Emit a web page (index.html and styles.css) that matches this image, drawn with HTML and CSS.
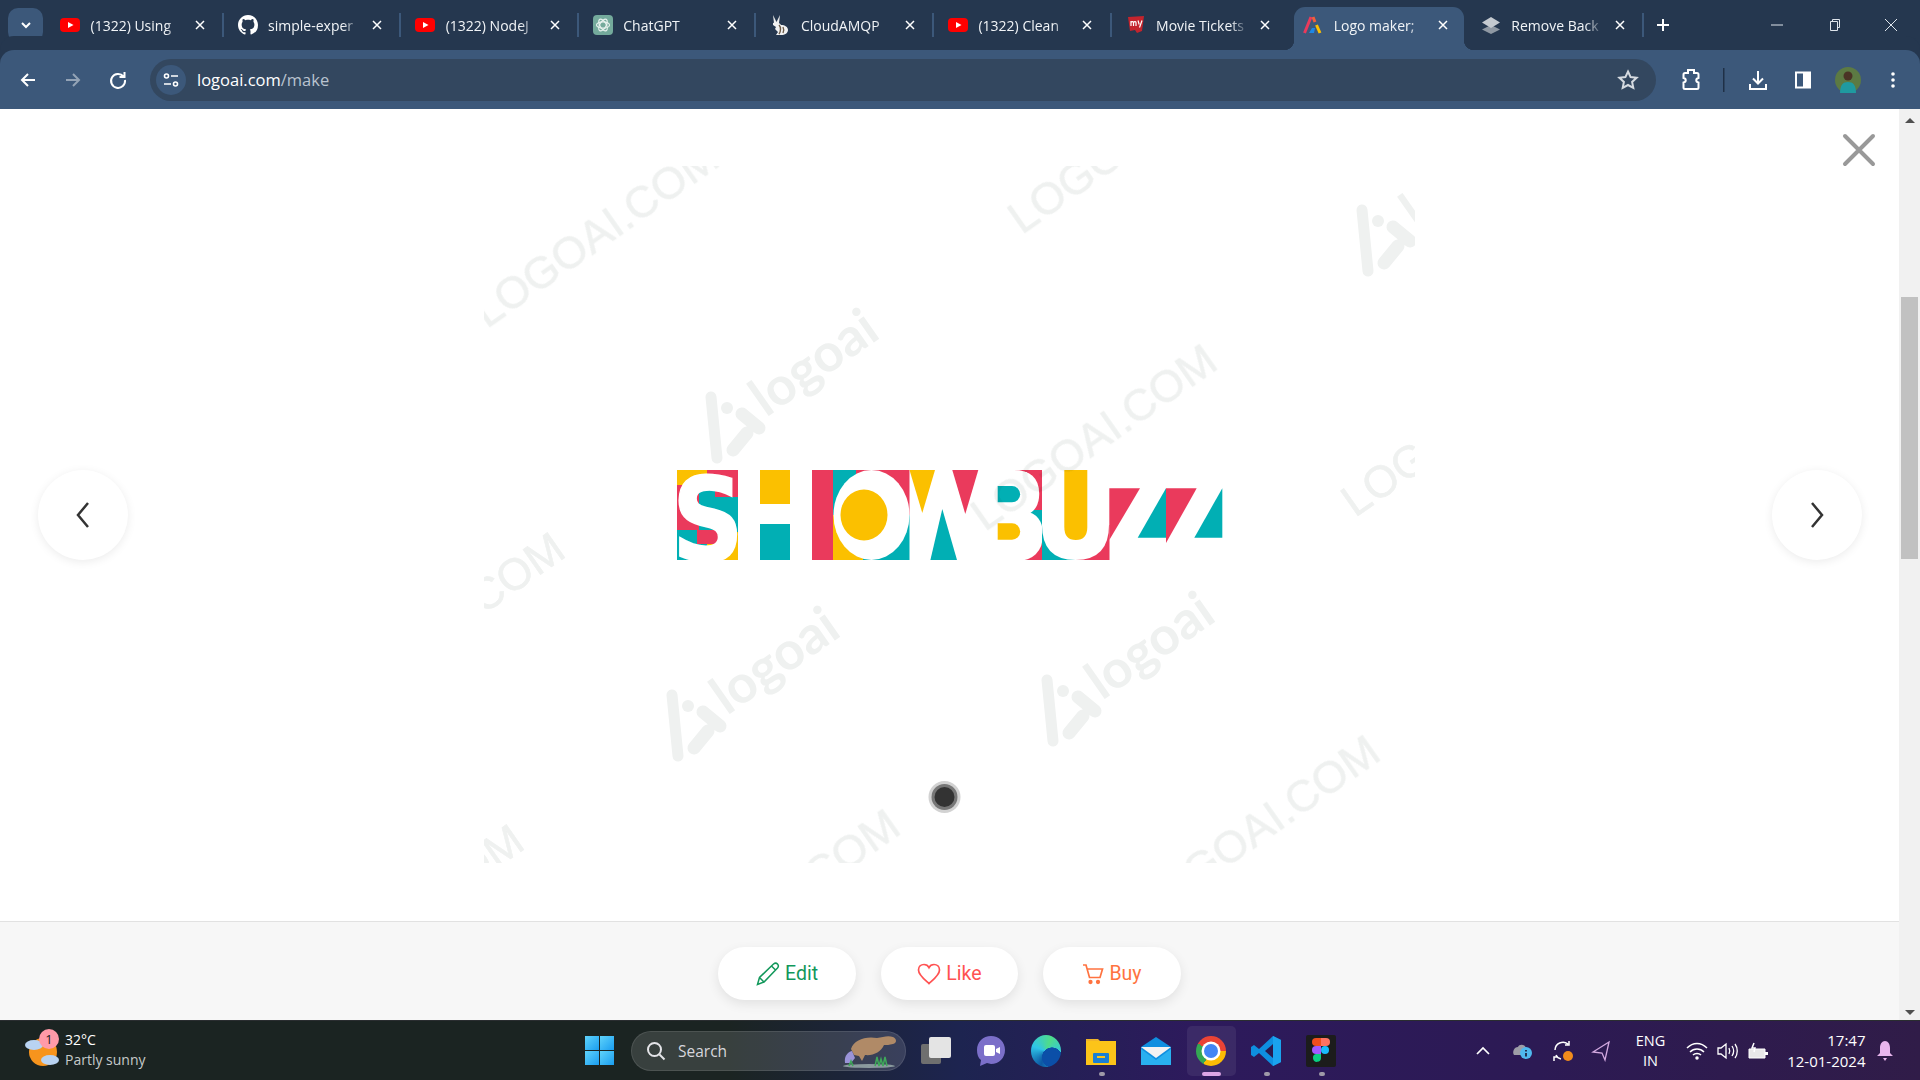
FILE: index.html
```html
<!DOCTYPE html>
<html lang="en">
<head>
    <meta charset="UTF-8">
    <title>Logo maker</title>
    <link rel="stylesheet" href="styles.css">
</head>
<body>
    <svg class="defs" width="0" height="0">
        <symbol id="yt" viewBox="0 0 20 20">
            <rect y="3" width="20" height="14" rx="4" fill="#f00"/>
            <path d="M8 7l5.5 3L8 13z" fill="#fff"/>
        </symbol>
        <symbol id="tabclose" viewBox="0 0 12 12">
            <path d="M2 2l8 8M10 2l-8 8" stroke="#fff" stroke-width="1.5" fill="none"/>
        </symbol>
    </svg>

    <header class="tabstrip">
        <button class="tab-search">
            <svg width="12" height="12" viewBox="0 0 12 12"><path d="M2 4l4 4 4-4" stroke="#fff" stroke-width="2" fill="none"/></svg>
        </button>
        <div class="tabs">
            <div class="tab">
                <svg class="favicon"><use href="#yt"/></svg>
                <span class="tab-title">(1322) Using</span>
                <svg class="tab-x"><use href="#tabclose"/></svg>
            </div>
            <div class="tab">
                <svg class="favicon" viewBox="0 0 16 16"><path fill="#fff" d="M8 0C3.58 0 0 3.58 0 8c0 3.54 2.29 6.53 5.47 7.59.4.07.55-.17.55-.38 0-.19-.01-.82-.01-1.49-2.01.37-2.53-.49-2.69-.94-.09-.23-.48-.94-.82-1.13-.28-.15-.68-.52-.01-.53.63-.01 1.08.58 1.23.82.72 1.21 1.87.87 2.33.66.07-.52.28-.87.51-1.07-1.78-.2-3.64-.89-3.64-3.95 0-.87.31-1.59.82-2.15-.08-.2-.36-1.02.08-2.12 0 0 .67-.21 2.2.82.64-.18 1.32-.27 2-.27.68 0 1.36.09 2 .27 1.53-1.04 2.2-.82 2.2-.82.44 1.1.16 1.92.08 2.12.51.56.82 1.27.82 2.15 0 3.07-1.87 3.75-3.65 3.95.29.25.54.73.54 1.48 0 1.07-.01 1.93-.01 2.2 0 .21.15.46.55.38A8.013 8.013 0 0016 8c0-4.42-3.58-8-8-8z"/></svg>
                <span class="tab-title">simple-exper</span>
                <svg class="tab-x"><use href="#tabclose"/></svg>
            </div>
            <div class="tab">
                <svg class="favicon"><use href="#yt"/></svg>
                <span class="tab-title">(1322) NodeJ</span>
                <svg class="tab-x"><use href="#tabclose"/></svg>
            </div>
            <div class="tab">
                <svg class="favicon" viewBox="0 0 20 20">
                    <rect width="20" height="20" rx="4" fill="#74aa9c"/>
                    <g fill="none" stroke="#e8f2ef" stroke-width="1.2">
                        <ellipse cx="10" cy="10" rx="6.5" ry="3.2"/>
                        <ellipse cx="10" cy="10" rx="6.5" ry="3.2" transform="rotate(60 10 10)"/>
                        <ellipse cx="10" cy="10" rx="6.5" ry="3.2" transform="rotate(120 10 10)"/>
                    </g>
                </svg>
                <span class="tab-title">ChatGPT</span>
                <svg class="tab-x"><use href="#tabclose"/></svg>
            </div>
            <div class="tab">
                <svg class="favicon" viewBox="0 0 20 20">
                    <path d="M3 0l4 8-3 0zM10 0l-1 8-3 0z" fill="#eee"/>
                    <path d="M3 8c4-2 7 0 8 2 4 0 7 2 7 5 0 3-3 5-7 5H6l2-3-3-3 1-2-3-2z" fill="#f2f2f2"/>
                    <path d="M9 10c2 2 2 6 0 9M13 12c1 2 1 4 0 6" stroke="#6b5a48" stroke-width="1.4" fill="none"/>
                </svg>
                <span class="tab-title">CloudAMQP</span>
                <svg class="tab-x"><use href="#tabclose"/></svg>
            </div>
            <div class="tab">
                <svg class="favicon"><use href="#yt"/></svg>
                <span class="tab-title">(1322) Clean</span>
                <svg class="tab-x"><use href="#tabclose"/></svg>
            </div>
            <div class="tab">
                <svg class="favicon" viewBox="0 0 20 20">
                    <path d="M2 2l16-1-2 15-5 2-2-3-5 1z" fill="#c4242d"/>
                    <path d="M5 11V6M5 7.5c1-1.500 2.500-1 2.500 0V11M7.500 7.500c1-1.500 2.500-1 2.500 0V11M12 5.500l1.200 4M16 5.500l-2.500 7" stroke="#fff" stroke-width="1.2" fill="none"/>
                </svg>
                <span class="tab-title">Movie Tickets</span>
                <svg class="tab-x"><use href="#tabclose"/></svg>
            </div>
            <div class="tab active">
                <svg class="favicon" viewBox="0 0 20 20">
                    <path d="M1.500 18L8 2" stroke="#ea3a5c" stroke-width="3" fill="none"/>
                    <path d="M10 2l2 5" stroke="#f25f3a" stroke-width="3" fill="none"/>
                    <path d="M13.500 10l3.500 8" stroke="#fbc000" stroke-width="3" fill="none"/>
                    <path d="M6 18l3-5h3l-1 5z" fill="#1e88e5"/>
                </svg>
                <span class="tab-title">Logo maker;</span>
                <svg class="tab-x"><use href="#tabclose"/></svg>
            </div>
            <div class="tab last">
                <svg class="favicon" viewBox="0 0 20 20">
                    <path d="M10 10L1 14.500l9 4.500 9-4.500z" fill="#8f98a3"/>
                    <path d="M10 2L1 7.500 10 13l9-5.500z" fill="#c5cad0"/>
                </svg>
                <span class="tab-title">Remove Back</span>
                <svg class="tab-x"><use href="#tabclose"/></svg>
            </div>
        </div>
        <svg class="new-tab" width="14" height="14" viewBox="0 0 14 14"><path d="M7 1v12M1 7h12" stroke="#fff" stroke-width="2"/></svg>
        <div class="window-controls">
            <svg width="14" height="14" viewBox="0 0 14 14"><path d="M1 7h12" stroke="#dfe5ec" stroke-width="1"/></svg>
            <svg width="14" height="14" viewBox="0 0 14 14"><path d="M3.500 3.500h7v9h-7zM5.500 3.500V1.500h7v8h-2" stroke="#dfe5ec" stroke-width="1" fill="none"/></svg>
            <svg width="14" height="14" viewBox="0 0 14 14"><path d="M1 1l12 12M13 1L1 13" stroke="#dfe5ec" stroke-width="1"/></svg>
        </div>
    </header>

    <nav class="toolbar">
        <button class="tool">
            <svg width="20" height="20" viewBox="0 0 20 20"><path d="M17 10H4M10 4l-6 6 6 6" stroke="#fff" stroke-width="2" fill="none"/></svg>
        </button>
        <button class="tool">
            <svg width="20" height="20" viewBox="0 0 20 20"><path d="M3 10h13M10 4l6 6-6 6" stroke="#93a3b6" stroke-width="2" fill="none"/></svg>
        </button>
        <button class="tool">
            <svg width="20" height="20" viewBox="0 0 20 20"><path d="M15.500 6.500A7 7 0 1 0 17 10M16.500 2v5h-5" stroke="#fff" stroke-width="2" fill="none"/></svg>
        </button>
        <div class="omnibox">
            <span class="site-info">
                <svg width="18" height="18" viewBox="0 0 18 18" fill="none" stroke="#fff" stroke-width="1.6"><circle cx="4.500" cy="5" r="2"/><path d="M9 5h7M2 13h7"/><circle cx="13.500" cy="13" r="2"/></svg>
            </span>
            <span class="url">logoai.com<span class="url-path">/make</span></span>
            <svg class="star" width="22" height="22" viewBox="0 0 22 22"><path d="M11 2.500l2.600 5.600 6 .7-4.500 4.100 1.200 6L11 16l-5.300 2.900 1.200-6L2.400 8.800l6-.7z" fill="none" stroke="#d5dae0" stroke-width="2"/></svg>
        </div>
        <button class="tool ext">
            <svg width="22" height="24" viewBox="0 0 22 24"><path d="M5 5h3V2h6v3h3a1.500 1.500 0 0 1 1.500 1.500V10c-3 .5-3 4 0 4.500v5a1.500 1.500 0 0 1-1.500 1.500H5a1.500 1.500 0 0 1-1.500-1.500v-5c3-.5 3-4 0-4.500V6.500A1.500 1.500 0 0 1 5 5z" fill="none" stroke="#fff" stroke-width="2"/></svg>
        </button>
        <span class="tool-sep"></span>
        <button class="tool">
            <svg width="22" height="22" viewBox="0 0 22 22"><path d="M11 2v12M6 9.500l5 5 5-5M3 15v5h16v-5" stroke="#fff" stroke-width="2" fill="none"/></svg>
        </button>
        <button class="tool">
            <svg width="20" height="20" viewBox="0 0 20 20"><rect x="3" y="2.500" width="14" height="15" fill="none" stroke="#fff" stroke-width="2"/><rect x="10" y="2.500" width="7" height="15" fill="#fff"/></svg>
        </button>
        <button class="tool">
            <svg width="26" height="26" viewBox="0 0 26 26">
                <circle cx="13" cy="13" r="13" fill="#5c7a43"/>
                <circle cx="13" cy="9" r="4.500" fill="#4a3325"/>
                <path d="M5 26c0-8 3-11 8-11s8 3 8 11z" fill="#1f9aa0"/>
            </svg>
        </button>
        <button class="tool">
            <svg width="20" height="20" viewBox="0 0 20 20" fill="#fff"><circle cx="10" cy="4" r="1.800"/><circle cx="10" cy="10" r="1.800"/><circle cx="10" cy="16" r="1.800"/></svg>
        </button>
    </nav>

    <div class="page">
        <main class="content">
            <section class="viewer">
                <svg class="canvas" width="1899" height="812" viewBox="0 109 1899 812">
                    <defs>
                        <clipPath id="wm-clip"><rect x="484" y="166" width="931" height="697"/></clipPath>
                        <g id="wm-domain">
                            <text class="wm-domain" transform="rotate(-35)">LOGOAI.COM</text>
                        </g>
                        <g id="wm-brand">
                            <path d="M-3-30L3 31" stroke="#eff1f0" stroke-width="11" stroke-linecap="round"/>
                            <circle cx="13" cy="-19" r="6" fill="#eff1f0"/>
                            <path d="M28-13L45 1M33 6L19 23" stroke="#eff1f0" stroke-width="13" stroke-linecap="round"/>
                            <text class="wm-brand" transform="translate(52 -9) rotate(-35)">logoai</text>
                        </g>
                    </defs>

                    <!-- SHOWBUZZ, coloured blocks with white letters on top -->
                    <g class="logo">
                        <rect x="677" y="470" width="30" height="15" fill="#fbc000"/>
                        <rect x="707" y="470" width="31" height="27" fill="#ea3a5c"/>
                        <rect x="677" y="485" width="22" height="45" fill="#ea3a5c"/>
                        <rect x="699" y="485" width="8" height="12" fill="#ea3a5c"/>
                        <rect x="699" y="497" width="39" height="35" fill="#01afb4"/>
                        <rect x="699" y="485" width="16" height="14" fill="#01afb4"/>
                        <rect x="677" y="530" width="30" height="30" fill="#01afb4"/>
                        <rect x="697" y="530" width="21" height="14" fill="#ea3a5c"/>
                        <rect x="718" y="532" width="20" height="28" fill="#fbc000"/>
                        <rect x="707" y="544" width="11" height="16" fill="#fbc000"/>
                        <text class="logo-letter s" transform="translate(672 559.500) scale(.86 1)">S</text>

                        <rect x="760" y="470" width="30" height="34" fill="#fbc000"/>
                        <rect x="760" y="524" width="30" height="36" fill="#01afb4"/>

                        <rect x="812" y="470" width="21.500" height="90" fill="#ea3a5c"/>
                        <rect x="833" y="470" width="38" height="45" fill="#01afb4"/>
                        <rect x="856" y="470" width="53.500" height="45" fill="#ea3a5c"/>
                        <rect x="833" y="515" width="30" height="45" fill="#fbc000"/>
                        <rect x="863" y="515" width="46.500" height="45" fill="#01afb4"/>
                        <ellipse cx="871.500" cy="515" rx="38" ry="45" fill="#fff"/>
                        <ellipse cx="864" cy="515" rx="23.500" ry="25.500" fill="#fbc000"/>

                        <path d="M909.500 470H935L922.300 513z" fill="#fbc000"/>
                        <path d="M952.300 470h26L965.300 514z" fill="#ea3a5c"/>
                        <path d="M942.300 509L957 560h-26.600z" fill="#01afb4"/>

                        <rect x="1015" y="470" width="27" height="40" fill="#ea3a5c"/>
                        <rect x="1015" y="510" width="27" height="28" fill="#01afb4"/>
                        <rect x="1005" y="538" width="37" height="22" fill="#ea3a5c"/>
                        <text class="logo-letter b" transform="translate(977 558.500) scale(.75 1)">B</text>
                        <rect x="985" y="472" width="42" height="86" fill="#fff"/>
                        <path d="M997.700 486H1012a8 8 0 0 1 0 16.300H997.700z" fill="#01afb4"/>
                        <path d="M997.700 523.300H1012a8 8 0 0 1 0 16.400H997.700z" fill="#fbc000"/>

                        <rect x="1042" y="525" width="34" height="35" fill="#01afb4"/>
                        <rect x="1076" y="525" width="33.500" height="35" fill="#ea3a5c"/>
                        <path d="M1042 470V525Q1042 560 1075.500 560Q1109 560 1109 525V470z" fill="#fff"/>
                        <path d="M1064.300 470h23v57q0 13-11.500 13t-11.500-13z" fill="#fbc000"/>

                        <path d="M1109.300 488.300H1140L1109.300 540z" fill="#ea3a5c"/>
                        <path d="M1166 488.300V537.700H1137.700z" fill="#01afb4"/>
                        <path d="M1166 488.300h30.700L1166 543z" fill="#ea3a5c"/>
                        <path d="M1222.300 488.300V537.700H1194.300z" fill="#01afb4"/>
                    </g>

                    <g class="watermarks" clip-path="url(#wm-clip)">
                        <use href="#wm-domain" x="487" y="329"/>
                        <use href="#wm-domain" x="985" y="532"/>
                        <use href="#wm-domain" x="1022" y="235"/>
                        <use href="#wm-domain" x="1355" y="518"/>
                        <use href="#wm-domain" x="333" y="720"/>
                        <use href="#wm-domain" x="292" y="1012"/>
                        <use href="#wm-domain" x="668" y="997"/>
                        <use href="#wm-domain" x="1148" y="923"/>
                        <use href="#wm-brand" x="714" y="427"/>
                        <use href="#wm-brand" x="1365" y="240"/>
                        <use href="#wm-brand" x="675" y="725"/>
                        <use href="#wm-brand" x="1050" y="710"/>
                    </g>

                    <circle cx="944.500" cy="797" r="16" fill="#d2d2d2"/>
                    <circle cx="944.500" cy="797" r="13" fill="#777"/>
                    <circle cx="944.500" cy="797" r="10" fill="#333"/>
                </svg>

                <button class="close-view">
                    <svg width="34" height="34" viewBox="0 0 34 34"><path d="M3 3l28 28M31 3L3 31" stroke="#999" stroke-width="4" stroke-linecap="round"/></svg>
                </button>
                <button class="nav-arrow prev">
                    <svg width="16" height="28" viewBox="0 0 16 28"><path d="M13 2L3 14l10 12" stroke="#333" stroke-width="2.500" fill="none"/></svg>
                </button>
                <button class="nav-arrow next">
                    <svg width="16" height="28" viewBox="0 0 16 28"><path d="M3 2l10 12L3 26" stroke="#333" stroke-width="2.500" fill="none"/></svg>
                </button>
            </section>

            <footer class="actions">
                <button class="action edit">
                    <svg width="24" height="24" viewBox="0 0 24 24" fill="none" stroke="currentColor" stroke-width="1.500"><path d="M1.500 22.500l2-7L17.500 2c1.500-1.200 3-1 4 0s1.200 2.500 0 4L8 20zM3.500 15.500L8 20M15.500 4l4.500 4.500"/></svg>
                    Edit
                </button>
                <button class="action like">
                    <svg width="24" height="22" viewBox="0 0 24 22" fill="none" stroke="currentColor" stroke-width="1.700"><path d="M12 20.500C7 16 1.500 12 1.500 7 1.500 3.500 4 1.500 7 1.500c2 0 4 1 5 3 1-2 3-3 5-3 3 0 5.500 2 5.500 5.500 0 5-5.500 9-10.500 13.500z"/></svg>
                    Like
                </button>
                <button class="action buy">
                    <svg width="22" height="22" viewBox="0 0 22 22" fill="none" stroke="currentColor" stroke-width="1.700"><path d="M1 2h3l3.500 12.500H18L20.500 6H5"/><circle cx="8.500" cy="19" r="1.300" fill="currentColor"/><circle cx="16" cy="19" r="1.300" fill="currentColor"/></svg>
                    Buy
                </button>
            </footer>
        </main>

        <aside class="scrollbar">
            <span class="scroll-up"></span>
            <span class="scroll-thumb"></span>
            <span class="scroll-down"></span>
        </aside>
    </div>

    <footer class="taskbar">
        <div class="weather">
            <span class="weather-icon">
                <svg width="36" height="38" viewBox="0 0 36 38">
                    <circle cx="19" cy="20" r="14" fill="#f7941d"/>
                    <ellipse cx="10" cy="13" rx="9" ry="5" fill="#b9d3f2"/>
                    <ellipse cx="26" cy="28" rx="9" ry="5" fill="#b9d3f2"/>
                </svg>
                <span class="weather-badge">1</span>
            </span>
            <div class="weather-text">
                <span class="temp">32°C</span>
                <span class="sky">Partly sunny</span>
            </div>
        </div>

        <div class="apps">
            <span class="start">
                <span></span><span></span><span></span><span></span>
            </span>
            <div class="search">
                <svg width="20" height="20" viewBox="0 0 20 20" fill="none" stroke="#e4e4e8" stroke-width="2"><circle cx="8.500" cy="8.500" r="6.500"/><path d="M13.500 13.500l5 5"/></svg>
                <span class="search-label">Search</span>
                <svg class="platypus" width="54" height="36" viewBox="0 0 54 36">
                    <path d="M8 16c3-9 14-13 26-11 6-1 11-3 16-1 4 2 4 6 0 7-4 1-6 1-9 1-3 7-11 11-19 10l-3 6-3-5-5-1z" fill="#b08a67"/>
                    <path d="M2 30c-1-6 2-11 7-12l3 7-4 5z" fill="#9a93d8"/>
                    <ellipse cx="26" cy="33" rx="26" ry="2" fill="#8a9a9e"/>
                    <path d="M32 33l2-9 2 9 2-7 2 7 2-9 2 9" stroke="#3fa85a" stroke-width="1.500" fill="none"/>
                    <path d="M6 33l2-5 2 5" stroke="#3fa85a" stroke-width="1.500" fill="none"/>
                </svg>
            </div>
            <span class="app">
                <svg width="30" height="28" viewBox="0 0 30 28"><rect x="0" y="7" width="20" height="20" rx="2" fill="#6f6f6f"/><rect x="8" y="0" width="22" height="21" rx="2" fill="#e4e4e4"/></svg>
            </span>
            <span class="app">
                <svg width="30" height="32" viewBox="0 0 30 32">
                    <path d="M15 1C7 1 1 7 1 15c0 4 1 8 4 10l-1 6 7-3c1 0 3 1 4 1 8 0 14-6 14-14S23 1 15 1z" fill="#7b6fc9"/>
                    <rect x="8" y="10" width="11" height="11" rx="2" fill="#fff"/>
                    <path d="M20 14l4-2v7l-4-2z" fill="#fff"/>
                </svg>
            </span>
            <span class="app">
                <span class="edge"></span>
            </span>
            <span class="app dotted">
                <svg width="30" height="30" viewBox="0 0 30 30">
                    <path d="M0 3h12l3 3H0z" fill="#f0b429"/>
                    <rect y="5" width="30" height="24" fill="#fcc419"/>
                    <rect x="7" y="17" width="16" height="10" rx="1" fill="#1a7fd4"/>
                    <rect x="11" y="20" width="8" height="2" fill="#fcc419"/>
                </svg>
            </span>
            <span class="app">
                <svg width="30" height="28" viewBox="0 0 30 28">
                    <path d="M0 10L15 0l15 10v18H0z" fill="#0f8fe0"/>
                    <path d="M0 10h30L15 21z" fill="#f2f2f2"/>
                    <path d="M0 28V12l15 11 15-11v16z" fill="#29b0f0"/>
                </svg>
            </span>
            <span class="app current">
                <span class="chrome"></span>
            </span>
            <span class="app dotted">
                <svg width="32" height="32" viewBox="0 0 32 32">
                    <path d="M23 1l8 4v22l-8 4-14-13-5 4-3-2V12l3-2 5 4z" fill="#0e8fe0"/>
                    <path d="M23 9l-8 7 8 7z" fill="#2b1a4e"/>
                    <path d="M23 1l8 4v22l-8 4z" fill="#1aa3ee"/>
                </svg>
            </span>
            <span class="app dotted">
                <svg width="30" height="32" viewBox="0 0 30 32">
                    <rect width="30" height="32" rx="2" fill="#1c1c1c"/>
                    <path d="M10 3h5v8h-5a4 4 0 0 1 0-8z" fill="#f24e1e"/>
                    <path d="M15 3h5a4 4 0 0 1 0 8h-5z" fill="#ff7262"/>
                    <path d="M10 11h5v8h-5a4 4 0 0 1 0-8z" fill="#a259ff"/>
                    <circle cx="19" cy="15" r="4" fill="#1abcfe"/>
                    <path d="M10 19h5v4a4 4 0 1 1-5-4z" fill="#0acf83"/>
                </svg>
            </span>
        </div>

        <div class="tray">
            <svg class="tray-chevron" width="14" height="14" viewBox="0 0 14 14"><path d="M1 10l6-6 6 6" stroke="#fff" stroke-width="1.700" fill="none"/></svg>
            <svg class="tray-cloud" width="22" height="20" viewBox="0 0 22 20">
                <path d="M2 14c-2-3 0-8 4-8 1-3 7-3 8 1v7z" fill="#9d9da6"/>
                <circle cx="14" cy="12" r="6" fill="#4fb8ee"/>
                <path d="M14 9v1.500M14 12v3.500" stroke="#1c1c3a" stroke-width="1.700"/>
            </svg>
            <svg class="tray-sync" width="22" height="24" viewBox="0 0 22 24">
                <path d="M3 11a8 8 0 0 1 13-6M17 2v4h-4M4 16a7 7 0 0 0 5 4M2 22v-4h4" stroke="#fff" stroke-width="1.500" fill="none"/>
                <circle cx="16" cy="17" r="5" fill="#f28c1c"/>
            </svg>
            <svg class="tray-nav" width="20" height="22" viewBox="0 0 20 22"><path d="M18 2L2 12l9 1 3 7z" stroke="#d3a9e0" stroke-width="1.300" fill="none"/></svg>
            <div class="lang"><span>ENG</span><span>IN</span></div>
            <svg class="tray-wifi" width="22" height="20" viewBox="0 0 22 20" fill="none" stroke="#fff" stroke-width="1.500"><path d="M1 7c6-6 14-6 20 0M4 11c4-4 10-4 14 0M7 14c2-2 6-2 8 0"/><circle cx="11" cy="17" r="1" fill="#fff"/></svg>
            <svg class="tray-vol" width="22" height="20" viewBox="0 0 22 20" fill="none" stroke="#fff" stroke-width="1.300"><path d="M2 7h3l5-4v14l-5-4H2zM13 7c1 2 1 4 0 6M16 5c2 3 2 7 0 10M19 3c3 4 3 10 0 14"/></svg>
            <svg class="tray-batt" width="24" height="20" viewBox="0 0 24 20"><path d="M3 8h16v9H3z" fill="#e8e8e8" stroke="#fff"/><path d="M19 11h3v3h-3z" fill="#fff"/><path d="M8 2l-2 5h3l-1 4" stroke="#fff" fill="none" stroke-width="1.500"/></svg>
            <div class="clock"><span>17:47</span><span>12-01-2024</span></div>
            <svg class="tray-bell" width="18" height="22" viewBox="0 0 18 22"><path d="M9 1c3 0 5 3 5 7v5l3 3H1l3-3V8c0-4 2-7 5-7zM7 18h4l-2 3z" fill="#e9b6ee"/></svg>
        </div>
    </footer>
</body>
</html>
```

FILE: styles.css
```css
* {
    box-sizing: border-box;
}
html, body {
    margin: 0;
    height: 100%;
    overflow: hidden;
}
body {
    display: flex;
    flex-direction: column;
    width: 1920px;
    height: 1080px;
    font-family: "Open Sans", "Noto Sans", sans-serif;
    color: #fff;
    background: #fff;
}
button {
    border: none;
    padding: 0;
    background: none;
    font: inherit;
}
.defs {
    position: absolute;
}

/* tab strip */
.tabstrip {
    display: flex;
    align-items: center;
    height: 50px;
    flex: none;
    background-color: #25374f;
    padding-left: 8px;
}
.tab-search {
    display: flex;
    align-items: center;
    justify-content: center;
    width: 35px;
    height: 34px;
    border-radius: 10px;
    background-color: #3c587a;
}
.tabs {
    display: flex;
    align-self: flex-end;
    margin-left: 3px;
    height: 43px;
}
.tab {
    position: relative;
    display: flex;
    align-items: center;
    width: 177.6px;
    height: 43px;
    padding-left: 14px;
    padding-bottom: 7px;
}
.tab::after {
    content: "";
    position: absolute;
    right: 0;
    top: 6px;
    width: 2px;
    height: 24px;
    background-color: #3c587a;
}
.tab.active {
    background-color: #3c587a;
    border-radius: 11px 11px 0 0;
    margin: 0 3px 0 5px;
    width: 169.6px;
    padding-left: 9px;
}
.tab.active::before {
    content: "";
    position: absolute;
    left: -10px;
    bottom: 0;
    width: 10px;
    height: 10px;
    background: radial-gradient(circle at 0 0, transparent 10px, #3c587a 10.5px);
}
.tab.active::after {
    left: auto;
    right: -10px;
    top: auto;
    bottom: 0;
    width: 10px;
    height: 10px;
    background: radial-gradient(circle at 100% 0, transparent 10px, #3c587a 10.5px);
}
.tab:has(+ .active)::after {
    display: none;
}
.favicon {
    width: 20px;
    height: 20px;
    flex: none;
}
.tab-title {
    width: 88px;
    margin-left: 10.5px;
    overflow: hidden;
    white-space: nowrap;
    font-size: 14px;
    color: #f1f4f7;
    -webkit-mask-image: linear-gradient(90deg, #000 85%, rgba(0, 0, 0, 0.25) 100%);
    mask-image: linear-gradient(90deg, #000 85%, rgba(0, 0, 0, 0.25) 100%);
}
.tab-x {
    width: 12px;
    height: 12px;
    margin-left: 15px;
    flex: none;
}
.new-tab {
    margin-left: 12px;
}
.window-controls {
    display: flex;
    gap: 43px;
    margin-left: auto;
    margin-right: 22px;
}

/* toolbar */
.toolbar {
    display: flex;
    align-items: center;
    flex: none;
    height: 59px;
    padding-left: 5px;
    background-color: #3c587a;
    border-radius: 14px 14px 0 0;
    box-shadow: 0 -14px 0 #25374f;
}
.tool {
    display: flex;
    align-items: center;
    justify-content: center;
    width: 45px;
    height: 36px;
    flex: none;
}
.omnibox {
    display: flex;
    align-items: center;
    width: 1506px;
    height: 42px;
    margin-left: 10px;
    padding: 0 17px 0 6px;
    border-radius: 21px;
    background-color: #33475f;
}
.site-info {
    display: flex;
    align-items: center;
    justify-content: center;
    width: 30px;
    height: 30px;
    border-radius: 50%;
    background-color: #3c587a;
}
.url {
    margin-left: 11px;
    font-size: 16.5px;
    color: #fff;
}
.url-path {
    color: #b9c3cf;
}
.star {
    margin-left: auto;
}
.ext {
    margin-left: 12px;
}
.tool-sep {
    width: 22px;
    height: 24px;
    flex: none;
    background: linear-gradient(#1f3047, #1f3047) center / 1.5px 100% no-repeat;
}

/* page */
.page {
    display: flex;
    flex: none;
    height: 911px;
}
.content {
    display: flex;
    flex-direction: column;
    width: 1899px;
}
.viewer {
    position: relative;
    height: 812px;
    background-color: #fff;
}
.canvas {
    display: block;
}
.logo-letter {
    font-weight: 700;
    fill: #fff;
}
.logo-letter.s {
    font-family: "DejaVu Sans", sans-serif;
    font-size: 116px;
    stroke: #fff;
    stroke-width: 1.5px;
}
.logo-letter.b {
    font-family: "Liberation Sans", sans-serif;
    font-size: 127px;
    stroke: #fff;
    stroke-width: 4px;
}
.watermarks {
    mix-blend-mode: multiply;
}
.wm-domain {
    font-family: "Liberation Sans", sans-serif;
    font-size: 44.5px;
    fill: #eff1f0;
    stroke: #eff1f0;
    stroke-width: 0.6px;
}
.wm-brand {
    font-family: "Lato", sans-serif;
    font-weight: 700;
    font-size: 53px;
    fill: #eff1f0;
}
.close-view {
    position: absolute;
    top: 24px;
    left: 1842px;
    line-height: 0;
}
.nav-arrow {
    position: absolute;
    top: 361px;
    display: flex;
    align-items: center;
    justify-content: center;
    width: 90px;
    height: 90px;
    border-radius: 50%;
    background-color: #fff;
    box-shadow: 0 2px 10px rgba(0, 0, 0, 0.08);
}
.prev {
    left: 38px;
}
.next {
    left: 1772px;
}
.actions {
    display: flex;
    justify-content: center;
    gap: 25px;
    flex: 1;
    padding-top: 25px;
    background-color: #f7f7f7;
    border-top: 1px solid #e2e2e2;
}
.action {
    display: flex;
    align-items: center;
    justify-content: center;
    gap: 5px;
    width: 138px;
    height: 53px;
    border-radius: 27px;
    background-color: #fff;
    box-shadow: 0 4px 12px rgba(0, 0, 0, 0.09);
    font-family: "Roboto", sans-serif;
    font-size: 19.5px;
}
.edit {
    color: #12985b;
}
.like {
    width: 137px;
    color: #ff5252;
}
.buy {
    color: #ff7340;
}
.scrollbar {
    position: relative;
    width: 21px;
    background-color: #f1f1f1;
}
.scroll-up, .scroll-down {
    position: absolute;
    left: 6px;
    width: 0;
    height: 0;
    border-left: 5px solid transparent;
    border-right: 5px solid transparent;
}
.scroll-up {
    top: 9px;
    border-bottom: 5px solid #505050;
}
.scroll-down {
    bottom: 5px;
    border-top: 5px solid #505050;
}
.scroll-thumb {
    position: absolute;
    left: 2px;
    top: 188px;
    width: 17px;
    height: 262px;
    background-color: #c1c1c1;
}

/* windows taskbar */
.taskbar {
    display: flex;
    align-items: center;
    flex: none;
    height: 60px;
    border-top: 1px solid #2a2d30;
    background: linear-gradient(90deg, #1b2422 0%, #1b2422 38%, #1d2450 50%, #2d1a5c 62%, #2c1a54 80%, #301c48 100%);
}
.weather {
    display: flex;
    align-items: center;
    width: 585px;
    padding-left: 24px;
    flex: none;
}
.weather-icon {
    position: relative;
    width: 41px;
    height: 38px;
    flex: none;
}
.weather-badge {
    position: absolute;
    left: 15px;
    top: -3px;
    width: 20px;
    height: 20px;
    border-radius: 50%;
    background-color: #ff9aa8;
    color: #1b1b1b;
    font-size: 13px;
    line-height: 20px;
    text-align: center;
}
.weather-text {
    display: flex;
    flex-direction: column;
    margin-top: -1px;
    font-size: 14px;
    line-height: 20px;
}
.sky {
    color: #c6caca;
}
.apps {
    display: flex;
    align-items: center;
    flex: none;
}
.start {
    display: grid;
    grid-template-columns: 14px 14px;
    grid-template-rows: 14px 14px;
    gap: 1px;
    flex: none;
}
.start span {
    background: linear-gradient(135deg, #5fd3fb, #1a9df0);
}
.search {
    display: flex;
    align-items: center;
    width: 275px;
    height: 40px;
    margin-left: 17px;
    padding-left: 14px;
    border-radius: 20px;
    background-color: rgba(255, 255, 255, 0.13);
    border: 1px solid rgba(255, 255, 255, 0.1);
}
.search-label {
    margin-left: 12px;
    font-size: 15.5px;
    color: #d6d6dc;
}
.platypus {
    margin-left: auto;
    margin-right: 8px;
}
.app {
    position: relative;
    display: flex;
    align-items: center;
    justify-content: center;
    width: 55px;
    height: 50px;
    flex: none;
}
.app:nth-child(3) {
    margin-left: 2.5px;
}
.app.dotted::after {
    content: "";
    position: absolute;
    bottom: 0;
    left: 25px;
    width: 6px;
    height: 4px;
    border-radius: 2px;
    background-color: #9f9aa8;
}
.app.current::before {
    content: "";
    position: absolute;
    left: 3px;
    top: 0;
    width: 49px;
    height: 50px;
    border-radius: 5px;
    background-color: rgba(255, 255, 255, 0.07);
}
.app.current::after {
    content: "";
    position: absolute;
    bottom: 0;
    left: 18px;
    width: 19px;
    height: 4px;
    border-radius: 2px;
    background-color: #dca5e6;
}
.edge {
    width: 30px;
    height: 32px;
    border-radius: 50%;
    background: radial-gradient(circle at 70% 70%, #0b4fa8 0 32%, transparent 33%), conic-gradient(from 200deg, #0c59a4, #2fc4e8, #4fdc8a, #2fc4e8, #0c59a4);
}
.chrome {
    position: relative;
    width: 30px;
    height: 30px;
    border-radius: 50%;
    background: conic-gradient(from -60deg, #ea4335 0 150deg, #fbbc04 150deg 270deg, #34a853 270deg 360deg);
}
.chrome::after {
    content: "";
    position: absolute;
    left: 8px;
    top: 8px;
    width: 14px;
    height: 14px;
    border-radius: 50%;
    background-color: #4285f4;
    box-shadow: 0 0 0 2.5px #fff;
}
.tray {
    display: flex;
    align-items: center;
    position: relative;
    flex: 1;
    height: 100%;
    margin-left: 127px;
    font-size: 14.5px;
}
.tray-cloud {
    margin-left: 22px;
}
.tray-sync {
    margin-left: 18px;
}
.tray-nav {
    margin-left: 17px;
}
.lang {
    display: flex;
    flex-direction: column;
    align-items: center;
    width: 40px;
    margin-left: 20px;
    line-height: 20px;
}
.tray-wifi {
    margin-left: 15px;
}
.tray-vol {
    margin-left: 8px;
}
.tray-batt {
    margin-left: 8px;
}
.clock {
    display: flex;
    flex-direction: column;
    align-items: flex-end;
    width: 96px;
    font-size: 15px;
    line-height: 21px;
}
.tray-bell {
    margin-left: 10px;
}
```
